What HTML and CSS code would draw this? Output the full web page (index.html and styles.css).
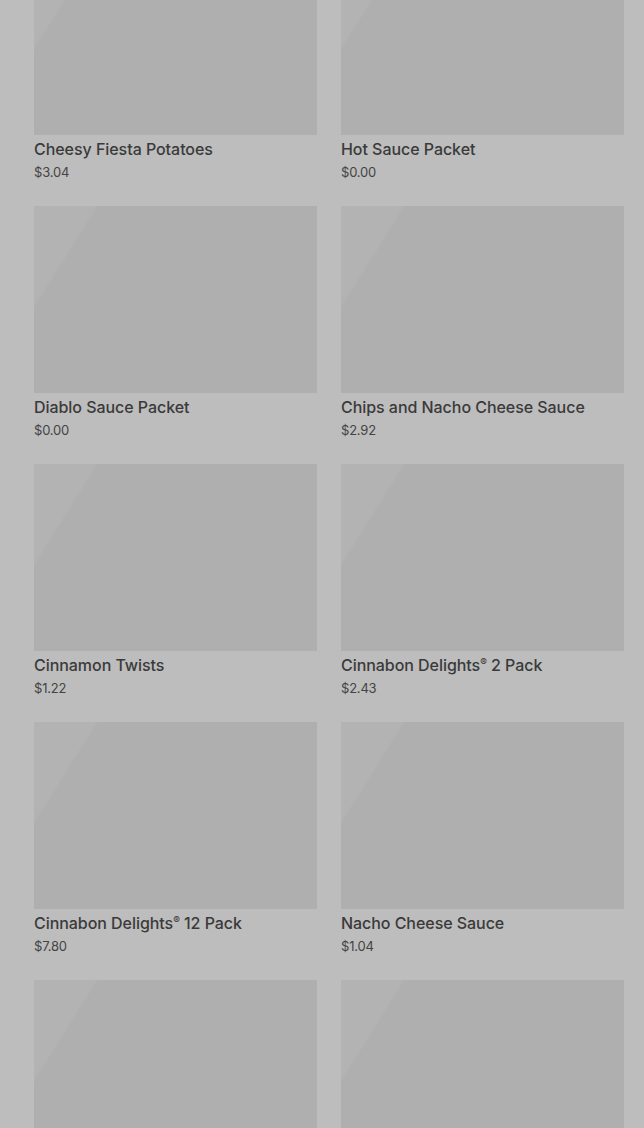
FILE: index.html
```html
<!DOCTYPE html>
<html lang="en">
<head>
    <meta charset="UTF-8">
    <meta name="viewport" content="width=device-width, initial-scale=1.0">
    <title>Menu</title>
    <link rel="stylesheet" href="styles.css">
</head>
<body>
    <div class="menu-grid">
        <div class="item">
            <div class="item-image"></div>
            <h3 class="item-name">Cheesy Fiesta Potatoes</h3>
            <p class="item-price">$3.04</p>
        </div>
        <div class="item">
            <div class="item-image"></div>
            <h3 class="item-name">Hot Sauce Packet</h3>
            <p class="item-price">$0.00</p>
        </div>
        <div class="item">
            <div class="item-image"></div>
            <h3 class="item-name">Diablo Sauce Packet</h3>
            <p class="item-price">$0.00</p>
        </div>
        <div class="item">
            <div class="item-image"></div>
            <h3 class="item-name">Chips and Nacho Cheese Sauce</h3>
            <p class="item-price">$2.92</p>
        </div>
        <div class="item">
            <div class="item-image"></div>
            <h3 class="item-name">Cinnamon Twists</h3>
            <p class="item-price">$1.22</p>
        </div>
        <div class="item">
            <div class="item-image"></div>
            <h3 class="item-name">Cinnabon Delights<sup>®</sup> 2 Pack</h3>
            <p class="item-price">$2.43</p>
        </div>
        <div class="item">
            <div class="item-image"></div>
            <h3 class="item-name">Cinnabon Delights<sup>®</sup> 12 Pack</h3>
            <p class="item-price">$7.80</p>
        </div>
        <div class="item">
            <div class="item-image"></div>
            <h3 class="item-name">Nacho Cheese Sauce</h3>
            <p class="item-price">$1.04</p>
        </div>
        <div class="item">
            <div class="item-image"></div>
        </div>
        <div class="item">
            <div class="item-image"></div>
        </div>
    </div>
</body>
</html>
```

FILE: styles.css
```css
/* Base */
* {
    margin: 0;
    padding: 0;
    box-sizing: border-box;
}

body {
    font-family: Inter, "Noto Sans", sans-serif;
    background-color: #bdbdbd;
    color: #3a3a3a;
    overflow: hidden;
}

/* Grid of menu items (page is scrolled, first row is cut) */
.menu-grid {
    display: grid;
    grid-template-columns: 283px 283px;
    column-gap: 24px;
    row-gap: 25px;
    padding: 0 20px 0 34px;
    margin-top: -52px;
}

/* Image placeholder with shimmer */
.item-image {
    height: 187px;
    background: linear-gradient(122deg, #b3b3b3 0, #b3b3b3 52px, #afafaf 55px, #afafaf 100%);
}

.item-name {
    font-size: 16px;
    font-weight: 500;
    line-height: 20px;
    margin-top: 4px;
    letter-spacing: -0.05px;
}

.item-name sup {
    font-size: 10px;
    vertical-align: 5px;
    line-height: 0;
}

.item-price {
    font-size: 13px;
    font-weight: 400;
    line-height: 18px;
    margin-top: 4px;
    color: #444444;
    letter-spacing: -0.2px;
}
```
